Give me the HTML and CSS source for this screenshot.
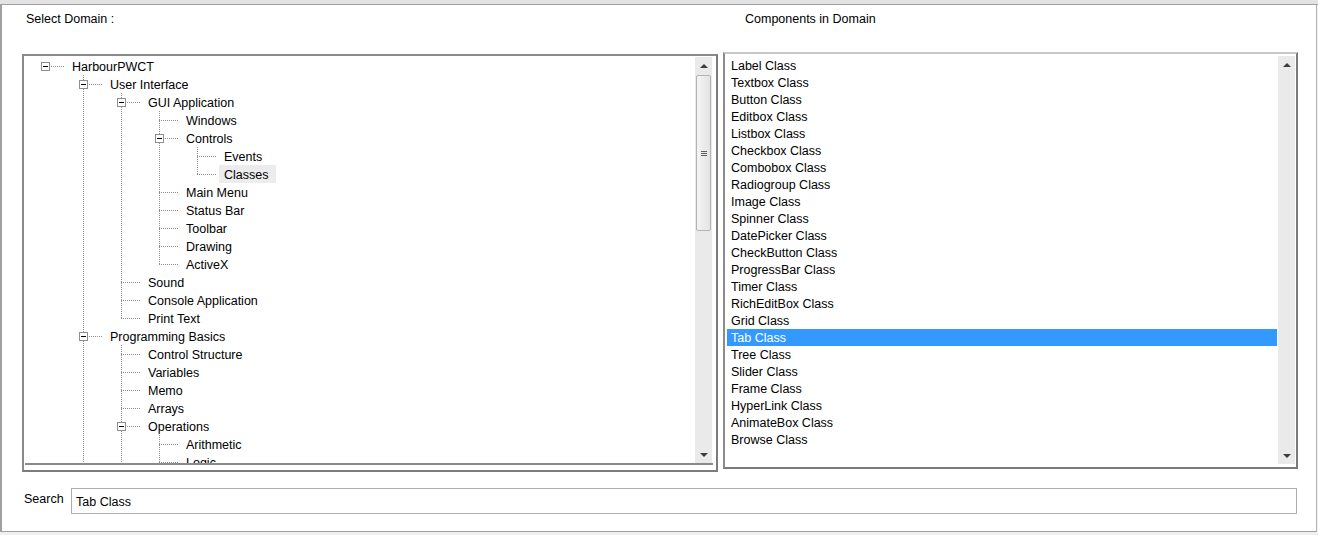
FILE: index.html
```html
<!DOCTYPE html>
<html>
<head>
<meta charset="utf-8">
<link rel="stylesheet" href="styles.css">
</head>
<body>
<div class="topband"></div>
<div class="frame">
  <div class="labels">
    <span class="lbl-left">Select Domain :</span>
    <span class="lbl-right">Components in Domain</span>
  </div>
  <div class="panels">
    <div class="tree">
      <div class="tree-body">
        <div class="tree-view">
          <svg class="tree-lines" width="672" height="412" viewBox="0 0 672 412">
            <g class="dots">
              <line x1="58.5" y1="18" x2="58.5" y2="420"/>
              <line x1="96.5" y1="36" x2="96.5" y2="262"/>
              <line x1="96.5" y1="288" x2="96.5" y2="420"/>
              <line x1="134.5" y1="54" x2="134.5" y2="208"/>
              <line x1="134.5" y1="378" x2="134.5" y2="420"/>
              <line x1="172.5" y1="90" x2="172.5" y2="118"/>
              <line x1="20" y1="9.5" x2="39" y2="9.5"/>
              <line x1="58" y1="27.5" x2="77" y2="27.5"/>
              <line x1="96" y1="45.5" x2="115" y2="45.5"/>
              <line x1="134" y1="63.5" x2="153" y2="63.5"/>
              <line x1="134" y1="81.5" x2="153" y2="81.5"/>
              <line x1="172" y1="99.5" x2="191" y2="99.5"/>
              <line x1="172" y1="117.5" x2="191" y2="117.5"/>
              <line x1="134" y1="135.5" x2="153" y2="135.5"/>
              <line x1="134" y1="153.5" x2="153" y2="153.5"/>
              <line x1="134" y1="171.5" x2="153" y2="171.5"/>
              <line x1="134" y1="189.5" x2="153" y2="189.5"/>
              <line x1="134" y1="207.5" x2="153" y2="207.5"/>
              <line x1="96" y1="225.5" x2="115" y2="225.5"/>
              <line x1="96" y1="243.5" x2="115" y2="243.5"/>
              <line x1="96" y1="261.5" x2="115" y2="261.5"/>
              <line x1="58" y1="279.5" x2="77" y2="279.5"/>
              <line x1="96" y1="297.5" x2="115" y2="297.5"/>
              <line x1="96" y1="315.5" x2="115" y2="315.5"/>
              <line x1="96" y1="333.5" x2="115" y2="333.5"/>
              <line x1="96" y1="351.5" x2="115" y2="351.5"/>
              <line x1="96" y1="369.5" x2="115" y2="369.5"/>
              <line x1="134" y1="387.5" x2="153" y2="387.5"/>
              <line x1="134" y1="405.5" x2="153" y2="405.5"/>
            </g>
            <g class="boxes">
              <rect x="16.5" y="5.5" width="8" height="8"/>
              <rect x="54.5" y="23.5" width="8" height="8"/>
              <rect x="92.5" y="41.5" width="8" height="8"/>
              <rect x="130.5" y="77.5" width="8" height="8"/>
              <rect x="54.5" y="275.5" width="8" height="8"/>
              <rect x="92.5" y="365.5" width="8" height="8"/>
            </g>
            <g class="minus">
              <line x1="18" y1="9.5" x2="23" y2="9.5"/>
              <line x1="56" y1="27.5" x2="61" y2="27.5"/>
              <line x1="94" y1="45.5" x2="99" y2="45.5"/>
              <line x1="132" y1="81.5" x2="137" y2="81.5"/>
              <line x1="56" y1="279.5" x2="61" y2="279.5"/>
              <line x1="94" y1="369.5" x2="99" y2="369.5"/>
            </g>
          </svg>
          <div class="trow l0">HarbourPWCT</div>
          <div class="trow l1">User Interface</div>
          <div class="trow l2">GUI Application</div>
          <div class="trow l3">Windows</div>
          <div class="trow l3">Controls</div>
          <div class="trow l4">Events</div>
          <div class="trow l4"><span class="tsel">Classes</span></div>
          <div class="trow l3">Main Menu</div>
          <div class="trow l3">Status Bar</div>
          <div class="trow l3">Toolbar</div>
          <div class="trow l3">Drawing</div>
          <div class="trow l3">ActiveX</div>
          <div class="trow l2">Sound</div>
          <div class="trow l2">Console Application</div>
          <div class="trow l2">Print Text</div>
          <div class="trow l1">Programming Basics</div>
          <div class="trow l2">Control Structure</div>
          <div class="trow l2">Variables</div>
          <div class="trow l2">Memo</div>
          <div class="trow l2">Arrays</div>
          <div class="trow l2">Operations</div>
          <div class="trow l3">Arithmetic</div>
          <div class="trow l3">Logic</div>
        </div>
        <div class="vscroll">
          <div class="sbtn"><span class="arr-up"></span></div>
          <div class="track">
            <div class="thumb"><span class="grip"></span></div>
          </div>
          <div class="sbtn"><span class="arr-down"></span></div>
        </div>
      </div>
    </div>
    <div class="list">
      <div class="list-items">
        <div class="lrow">Label Class</div>
        <div class="lrow">Textbox Class</div>
        <div class="lrow">Button Class</div>
        <div class="lrow">Editbox Class</div>
        <div class="lrow">Listbox Class</div>
        <div class="lrow">Checkbox Class</div>
        <div class="lrow">Combobox Class</div>
        <div class="lrow">Radiogroup Class</div>
        <div class="lrow">Image Class</div>
        <div class="lrow">Spinner Class</div>
        <div class="lrow">DatePicker Class</div>
        <div class="lrow">CheckButton Class</div>
        <div class="lrow">ProgressBar Class</div>
        <div class="lrow">Timer Class</div>
        <div class="lrow">RichEditBox Class</div>
        <div class="lrow">Grid Class</div>
        <div class="lrow sel">Tab Class</div>
        <div class="lrow">Tree Class</div>
        <div class="lrow">Slider Class</div>
        <div class="lrow">Frame Class</div>
        <div class="lrow">HyperLink Class</div>
        <div class="lrow">AnimateBox Class</div>
        <div class="lrow">Browse Class</div>
      </div>
      <div class="vscroll">
        <div class="sbtn"><span class="arr-up"></span></div>
        <div class="track"></div>
        <div class="sbtn"><span class="arr-down"></span></div>
      </div>
    </div>
  </div>
  <div class="search">
    <span class="search-label">Search</span>
    <div class="search-input">Tab Class</div>
  </div>
</div>
</body>
</html>
```

FILE: styles.css
```css
body {
  margin: 0;
  width: 1318px;
  height: 535px;
  overflow: hidden;
  background: #f0f0f0;
  font-family: "Liberation Sans", Arial, sans-serif;
  font-size: 12.5px;
  color: #000;
}

.topband {
  height: 4px;
  background: #e3e3e3;
  border-bottom: 1px solid #a0a0a0;
}

.frame {
  box-sizing: border-box;
  width: 1317px;
  height: 527px;
  background: #fff;
  border-left: 2px solid #a0a0a0;
  border-right: 1px solid #b4b4b4;
  border-bottom: 1px solid #a0a0a0;
  display: flex;
  flex-direction: column;
}

.labels {
  display: flex;
  margin-top: 6px;
  padding-left: 24px;
  height: 16px;
  line-height: 16px;
}

.lbl-left {
  flex: 0 0 719px;
}

.panels {
  display: flex;
  align-items: flex-start;
  margin-top: 25px;
  padding-left: 20px;
}

.tree {
  box-sizing: border-box;
  width: 696px;
  height: 418px;
  margin-top: 2px;
  border: 2px solid;
  border-color: #8a8a8a #7c7c7c #7c7c7c #8a8a8a;
  padding: 1px 3px 5px 1px;
  background: #fff;
}

.tree-body {
  display: flex;
  height: 406px;
  padding-right: 1px;
  border-bottom: 2px solid #8a8a8a;
}

.tree-view {
  flex: 1;
  position: relative;
  overflow: hidden;
}

.tree-lines {
  position: absolute;
  left: 0;
  top: 0;
}

.dots line {
  stroke: #8e8e8e;
  stroke-width: 1;
  stroke-dasharray: 1 1;
  shape-rendering: crispEdges;
}

.boxes rect {
  fill: #fff;
  stroke: #8f8f8f;
  stroke-width: 1;
  shape-rendering: crispEdges;
}

.minus line {
  stroke: #000;
  stroke-width: 1;
  shape-rendering: crispEdges;
}

.trow {
  position: relative;
  height: 18px;
  line-height: 20px;
  white-space: nowrap;
}

.l0 { padding-left: 47px; }
.l1 { padding-left: 85px; }
.l2 { padding-left: 123px; }
.l3 { padding-left: 161px; }
.l4 { padding-left: 199px; }

.tsel {
  display: inline-block;
  height: 18px;
  margin-left: -5px;
  padding: 0 8px 0 5px;
  background: #ececec;
}

.vscroll {
  width: 17px;
  display: flex;
  flex-direction: column;
  background: #eaeaea;
}

.sbtn {
  height: 17px;
  display: flex;
  align-items: center;
  justify-content: center;
}

.arr-up {
  width: 0;
  height: 0;
  border-left: 4px solid transparent;
  border-right: 4px solid transparent;
  border-bottom: 4px solid #3c3c3c;
}

.arr-down {
  width: 0;
  height: 0;
  border-left: 4px solid transparent;
  border-right: 4px solid transparent;
  border-top: 4px solid #3c3c3c;
}

.track {
  flex: 1;
  padding-top: 1px;
}

.thumb {
  box-sizing: border-box;
  height: 156px;
  margin: 0 1px;
  border: 1px solid #b3b3b3;
  border-radius: 2px;
  background: linear-gradient(to right, #f4f4f4, #e4e4e4);
  display: flex;
  align-items: center;
  justify-content: center;
}

.grip {
  width: 6px;
  height: 5px;
  background: repeating-linear-gradient(to bottom, #5f5f5f 0 1px, transparent 1px 2px);
}

.list {
  box-sizing: border-box;
  width: 575px;
  height: 417px;
  margin-left: 5px;
  border: 2px solid;
  border-color: #c8c8c8 #7a7a7a #7a7a7a #8c8c8c;
  padding: 2px 1px 3px 2px;
  display: flex;
  background: #fff;
}

.list-items {
  flex: 1;
  padding-top: 1px;
  padding-right: 1px;
}

.lrow {
  height: 17px;
  line-height: 19px;
  padding-left: 4px;
  white-space: nowrap;
}

.lrow.sel {
  background: #3399ff;
  color: #fff;
}

.search {
  display: flex;
  align-items: flex-start;
  margin-top: 16px;
  padding-left: 22px;
}

.search-label {
  width: 47px;
  padding-top: 3px;
  line-height: 16px;
}

.search-input {
  box-sizing: border-box;
  width: 1226px;
  height: 26px;
  border: 1px solid #abadb3;
  padding-left: 4px;
  line-height: 26px;
}
```
